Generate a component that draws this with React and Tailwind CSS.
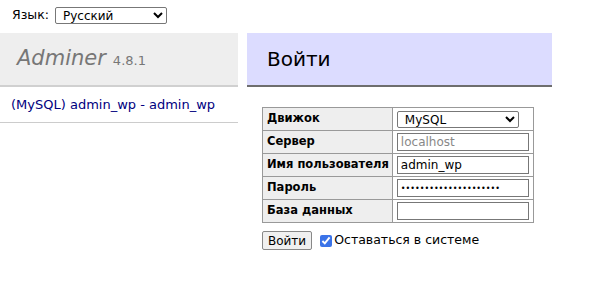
import React, { useState } from 'react';

const font = { fontFamily: '"DejaVu Sans", Verdana, sans-serif' };

const Row = ({ label, children }) => (
  <tr className="h-[23px]">
    <th className="bg-[#eee] border border-[#999] pl-[4px] pr-[3px] text-left font-bold text-[11.5px] text-black">{label}</th>
    <td className="border border-[#999] px-[4px]">{children}</td>
  </tr>
);

const App = () => {
  const [lang, setLang] = useState('ru');
  const [user, setUser] = useState('admin_wp');
  const [pass, setPass] = useState('xxxxxxxxxxxxxxxxxxxxx');
  const [db, setDb] = useState('');
  const [remember, setRemember] = useState(true);

  return (
    <div className="w-[600px] h-[307px] bg-white text-black text-[12px]" style={font}>
      <div className="flex items-center h-[31px] pl-[12px] pb-[1px]">
        <span className="mr-[6px] text-[12.5px]">Язык:</span>
        <select
          value={lang}
          onChange={(e) => setLang(e.target.value)}
          className="w-[112px] h-[17px] border border-[#777] rounded-[2px] bg-white text-[12px] pl-[3px]"
          style={font}
        >
          <option value="ru">Русский</option>
          <option value="en">English</option>
        </select>
      </div>

      <div className="flex mt-[2px]">
        <div className="w-[238px]">
          <h1 className="h-[54px] bg-[#eee] border-b-2 border-[#d0d0d0] flex items-center pl-[17px] pb-[1px] text-[#777]">
            <span className="italic text-[21px]">Adminer</span>
            <span className="text-[13px] ml-[7px] mt-[4px]">4.8.1</span>
          </h1>
          <div className="h-[36px] border-b border-[#ccc] flex items-center pl-[11px] pt-[1px]">
            <a href="#" className="text-[#000080] text-[13px]">(MySQL) admin_wp - admin_wp</a>
          </div>
        </div>

        <div className="ml-[9px]">
          <h2 className="w-[305px] h-[54px] bg-[#dcdcff] border-b-2 border-[#6e6e6e] flex items-center pl-[20px] text-[20px] text-black">
            Войти
          </h2>

          <div className="pl-[15px] pt-[20px]">
            <table className="border-collapse border border-[#999]">
              <tbody>
                <Row label="Движок">
                  <select
                    className="w-[122px] h-[17px] border border-[#777] rounded-[2px] bg-white text-[12px] pl-[3px] block"
                    style={font}
                    defaultValue="server"
                  >
                    <option value="server">MySQL</option>
                  </select>
                </Row>
                <Row label="Сервер">
                  <input
                    className="w-[132px] h-[18px] border border-[#777] px-[3px] text-[12px] placeholder-[#888] block"
                    placeholder="localhost"
                    style={font}
                  />
                </Row>
                <Row label="Имя пользователя">
                  <input
                    className="w-[132px] h-[18px] border border-[#777] px-[3px] text-[12px] block"
                    value={user}
                    onChange={(e) => setUser(e.target.value)}
                    style={font}
                  />
                </Row>
                <Row label="Пароль">
                  <input
                    type="password"
                    className="w-[132px] h-[18px] border border-[#777] px-[3px] text-[8px] block"
                    value={pass}
                    onChange={(e) => setPass(e.target.value)}
                    style={font}
                  />
                </Row>
                <Row label="База данных">
                  <input
                    className="w-[132px] h-[18px] border border-[#777] px-[3px] text-[12px] block"
                    value={db}
                    onChange={(e) => setDb(e.target.value)}
                    style={font}
                  />
                </Row>
              </tbody>
            </table>

            <div className="flex items-center mt-[8px]">
              <button
                className="h-[19px] px-[5px] border border-[#888] rounded-[2px] bg-[#f0f0f0] text-[12px]"
                style={font}
              >
                Войти
              </button>
              <label className="flex items-center ml-[8px] text-[12.5px]">
                <input
                  type="checkbox"
                  checked={remember}
                  onChange={(e) => setRemember(e.target.checked)}
                  className="w-[12px] h-[12px] accent-[#3b73e8] mr-[2px]"
                />
                Оставаться в системе
              </label>
            </div>
          </div>
        </div>
      </div>
    </div>
  );
};

export default App;
